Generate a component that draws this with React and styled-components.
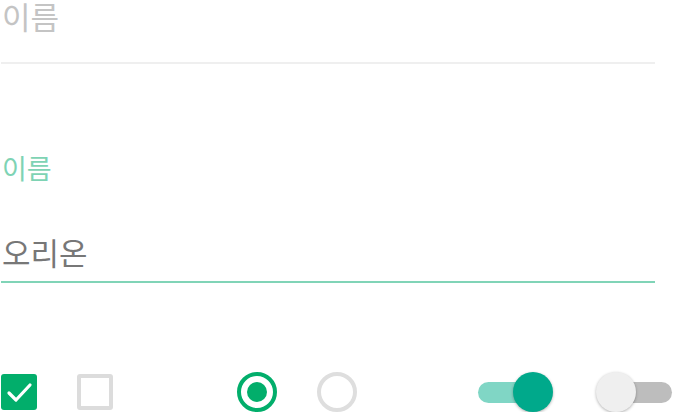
import React from "react";
import styled, { createGlobalStyle } from "styled-components";

const Global = createGlobalStyle`
  html, body { margin: 0; padding: 0; background: #fff; }
  body { font-family: Roboto, "Noto Sans CJK KR", sans-serif; }
`;

const Page = styled.div`
  width: 674px;
  padding: 0 0 0 1px;
  display: flex;
  flex-direction: column;
`;

const Field = styled.div`
  width: 654px;
  display: flex;
  flex-direction: column;
  margin-top: ${(p) => p.$top || 0}px;
`;

const Text = styled.div`
  font-family: Roboto, "Noto Sans CJK KR", sans-serif;
  font-size: ${(p) => p.$size}px;
  line-height: ${(p) => p.$size}px;
  color: ${(p) => p.$color};
  margin-top: ${(p) => p.$mt || 0}px;
  padding-left: 1px;
`;

const Underline = styled.div`
  height: ${(p) => p.$h}px;
  background: ${(p) => p.$color};
  margin-top: ${(p) => p.$mt}px;
`;

const Controls = styled.div`
  display: flex;
  align-items: center;
  margin-top: 89px;
  height: 40px;
  & > * { flex-shrink: 0; }
`;

const Box = styled.div`
  width: 36px;
  height: 36px;
  box-sizing: border-box;
  border-radius: 3px;
  margin-left: ${(p) => p.$ml || 0}px;
  background: ${(p) => (p.$checked ? "#02ae6b" : "#fff")};
  border: ${(p) => (p.$checked ? "none" : "4px solid #dcdcdc")};
  display: flex;
  align-items: center;
  justify-content: center;
`;

const Radio = styled.div`
  width: 40px;
  height: 40px;
  box-sizing: border-box;
  border-radius: 50%;
  margin-left: ${(p) => p.$ml || 0}px;
  border: 4px solid ${(p) => (p.$checked ? "#02ae6b" : "#dedede")};
  display: flex;
  align-items: center;
  justify-content: center;
`;

const Dot = styled.div`
  width: 20px;
  height: 20px;
  border-radius: 50%;
  background: #02ae6b;
`;

const Switch = styled.div`
  position: relative;
  width: ${(p) => p.$w}px;
  height: 40px;
  margin-left: ${(p) => p.$ml || 0}px;
  display: flex;
  align-items: center;
  justify-content: ${(p) => (p.$on ? "flex-end" : "flex-start")};
`;

const Track = styled.div`
  position: absolute;
  top: 10px;
  height: 21px;
  border-radius: 11px;
  left: ${(p) => p.$l}px;
  right: ${(p) => p.$r}px;
  background: ${(p) => (p.$on ? "#80d6c5" : "#bdbdbd")};
`;

const Thumb = styled.div`
  position: relative;
  width: 40px;
  height: 40px;
  border-radius: 50%;
  background: ${(p) => (p.$on ? "#00a98b" : "#efefef")};
  box-shadow: 0 1px 3px rgba(0, 0, 0, 0.3);
`;

export default function App() {
  return (
    <>
      <Global />
      <Page>
        <Field>
          <Text $size={31} $color="#c4c4c4" $mt={3}>이름</Text>
          <Underline $h={2} $color="#efefef" $mt={28} />
        </Field>
        <Field $top={93}>
          <Text $size={27} $color="#7ed3b4">이름</Text>
          <Text $size={31} $color="#777777" $mt={55}>오리온</Text>
          <Underline $h={2} $color="#80d4b7" $mt={11} />
        </Field>
        <Controls>
          <Box $checked>
            <svg width="36" height="36" viewBox="0 0 36 36">
              <polyline points="8,19 15,26 29,11" fill="none" stroke="#fff" strokeWidth="3.2" strokeLinecap="round" strokeLinejoin="round" />
            </svg>
          </Box>
          <Box $ml={40} />
          <Radio $checked $ml={124}>
            <Dot />
          </Radio>
          <Radio $ml={40} />
          <Switch $on $w={75} $ml={121}>
            <Track $on $l={0} $r={10} />
            <Thumb $on />
          </Switch>
          <Switch $w={76} $ml={43}>
            <Track $l={10} $r={0} />
            <Thumb />
          </Switch>
        </Controls>
      </Page>
    </>
  );
}
